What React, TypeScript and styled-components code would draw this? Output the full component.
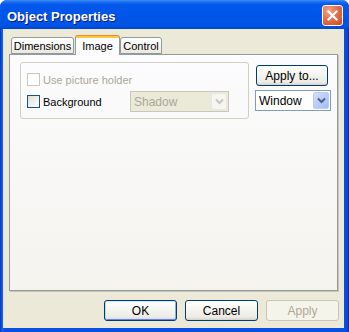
import React from 'react';
import styled, { createGlobalStyle } from 'styled-components';

const GlobalStyle = createGlobalStyle`
  html, body {
    margin: 0;
    padding: 0;
    background: #ffffff;
  }
  body {
    font-family: "Liberation Sans", Arial, sans-serif;
    font-size: 11px;
    color: #000000;
  }
`;

const Window = styled.div`
  width: 349px;
  height: 332px;
  box-sizing: border-box;
  display: flex;
  flex-direction: column;
  border-radius: 7px 7px 0 0;
  overflow: hidden;
  background: linear-gradient(to right, #0022b8 0, #0a50e0 1px, #1663ea 3px, #0a50e0 4px, #0a50e0 calc(100% - 5px), #0845d6 calc(100% - 1px), #001ea8 100%);
`;

const TitleBar = styled.div`
  height: 29px;
  flex: none;
  display: flex;
  align-items: center;
  justify-content: space-between;
  padding: 1px 6px 0 7px;
  box-sizing: border-box;
  background: linear-gradient(
    180deg,
    #3d8ff5 0%,
    #1a6cf0 7%,
    #0358ec 16%,
    #0056e8 50%,
    #0155e6 86%,
    #0047d4 100%
  );
`;

const Title = styled.span`
  font-family: "Liberation Sans", Arial, sans-serif;
  font-weight: bold;
  font-size: 13px;
  color: #ffffff;
  text-shadow: 1px 1px 0 #0a1883;
  padding-top: 2px;
`;

const CloseButton = styled.div`
  width: 21px;
  height: 21px;
  box-sizing: border-box;
  border: 1px solid #ffffff;
  border-radius: 3px;
  display: flex;
  align-items: center;
  justify-content: center;
  background: radial-gradient(circle at 30% 25%, #f0a58a 0%, #e2704c 45%, #cd4a22 100%);
`;

const Frame = styled.div`
  flex: 1;
  display: flex;
  padding: 0 5px 4px 3px;
  min-height: 0;
`;

const Body = styled.div`
  flex: 1;
  display: flex;
  flex-direction: column;
  background: #ece9d8;
  padding: 0 5px 7px 6px;
`;

const TabStrip = styled.div`
  display: flex;
  align-items: flex-end;
  height: 19px;
  margin-top: 7px;
  padding-left: 2px;
  position: relative;
  z-index: 1;
  margin-bottom: -1px;
`;

const Tab = styled.div<{ $active?: boolean; $w: number; $gap?: number }>`
  width: ${p => p.$w}px;
  margin-left: ${p => p.$gap || 0}px;
  box-sizing: border-box;
  height: ${p => (p.$active ? 20 : 17)}px;
  display: flex;
  align-items: center;
  justify-content: center;
  border: 1px solid #919b9c;
  border-bottom: ${p => (p.$active ? 'none' : '1px solid #919b9c')};
  border-top: ${p => (p.$active ? 'none' : '1px solid #919b9c')};
  border-radius: 3px 3px 0 0;
  padding-top: ${p => (p.$active ? 1 : 0)}px;
  background: ${p =>
    p.$active
      ? 'linear-gradient(#e68b2c 0, #e68b2c 1px, #ffc73c 1px, #ffc73c 3px, #ffffff 3px, #fcfcfe 100%)'
      : 'linear-gradient(#ffffff 0%, #f4f3ef 60%, #eae8de 100%)'};
  margin-bottom: ${p => (p.$active ? 0 : 1)}px;
`;

const Panel = styled.div`
  flex: 1;
  margin-right: 1px;
  border: 1px solid #919b9c;
  box-shadow: 1px 1px 0 #c8c6b8;
  background: linear-gradient(#fcfcfe, #f4f3ee);
  display: flex;
  align-items: flex-start;
  padding: 7px 0 0 10px;
`;

const GroupBox = styled.div`
  width: 229px;
  height: 57px;
  box-sizing: border-box;
  border: 1px solid #d0d0bf;
  border-radius: 3px;
  padding: 10px 6px 0 6px;
  display: flex;
  flex-direction: column;
  gap: 5px;
`;

const Row = styled.div<{ $h: number }>`
  height: ${p => p.$h}px;
  display: flex;
  align-items: center;
`;

const CheckBox = styled.div<{ $disabled?: boolean }>`
  width: 13px;
  height: 13px;
  box-sizing: border-box;
  flex: none;
  border: 1px solid ${p => (p.$disabled ? '#cac8bb' : '#1c5180')};
  background: ${p => (p.$disabled ? '#ffffff' : 'linear-gradient(135deg, #dcdcd7 0%, #f6f6f3 70%, #ffffff 100%)')};
`;

const Label = styled.span<{ $disabled?: boolean; $w?: number }>`
  margin-left: 3px;
  width: ${p => (p.$w ? `${p.$w}px` : 'auto')};
  color: ${p => (p.$disabled ? '#aca899' : '#000000')};
  white-space: nowrap;
`;

const Combo = styled.div<{ $disabled?: boolean; $w: number }>`
  width: ${p => p.$w}px;
  height: 21px;
  box-sizing: border-box;
  flex: none;
  border: 1px solid ${p => (p.$disabled ? '#c9c7ba' : '#7f9db9')};
  background: ${p => (p.$disabled ? '#ebe9d8' : '#ffffff')};
  color: ${p => (p.$disabled ? '#aca899' : '#000000')};
  display: flex;
  align-items: center;
  padding: 0 1px 0 3px;
  font-size: 12px;
`;

const ComboText = styled.span`
  flex: 1;
`;

const ComboArrow = styled.div<{ $disabled?: boolean }>`
  width: 16px;
  height: 17px;
  box-sizing: border-box;
  border-radius: 2px;
  display: flex;
  align-items: center;
  justify-content: center;
  border: 1px solid ${p => (p.$disabled ? '#e8e8df' : '#b9cdf8')};
  background: ${p =>
    p.$disabled
      ? '#f5f5f1'
      : 'linear-gradient(135deg, #d2defc 0%, #b9cdf9 50%, #a6bdf5 100%)'};
`;

const RightColumn = styled.div`
  display: flex;
  flex-direction: column;
  gap: 4px;
  margin-left: 6px;
  margin-top: 3px;
`;

const Button = styled.div<{ $w: number; $default?: boolean; $disabled?: boolean; $shift?: number }>`
  width: ${p => p.$w}px;
  height: 21px;
  margin-left: ${p => p.$shift || 0}px;
  box-sizing: border-box;
  border: 1px solid ${p => (p.$disabled ? '#c9c7ba' : '#003c74')};
  border-radius: 3px;
  display: flex;
  align-items: center;
  justify-content: center;
  font-size: 12px;
  color: ${p => (p.$disabled ? '#aca899' : '#000000')};
  background: ${p =>
    p.$disabled
      ? '#f5f4ea'
      : 'linear-gradient(#ffffff 0%, #f6f6f2 40%, #ecebe5 85%, #d6d0c5 100%)'};
  box-shadow: ${p =>
    p.$default ? 'inset 0 1px 0 #cee7ff, inset 1px 0 0 #bcd4f6, inset -1px 0 0 #89ade4, inset 0 -1px 0 #6982ee' : 'none'};
`;

const ButtonRow = styled.div`
  display: flex;
  justify-content: flex-end;
  gap: 8px;
  margin-top: 9px;
`;

const Chevron: React.FC<{ color: string }> = ({ color }) => (
  <svg width="9" height="7" viewBox="0 0 9 7">
    <path d="M1 1.5 L4.5 5 L8 1.5" fill="none" stroke={color} strokeWidth="2" />
  </svg>
);

export default function App() {
  return (
    <>
      <GlobalStyle />
      <Window>
        <TitleBar>
          <Title>Object Properties</Title>
          <CloseButton>
            <svg width="13" height="13" viewBox="0 0 13 13">
              <path d="M2.5 2.5 L10.5 10.5 M10.5 2.5 L2.5 10.5" stroke="#ffffff" strokeWidth="2.2" strokeLinecap="square" />
            </svg>
          </CloseButton>
        </TitleBar>
        <Frame>
          <Body>
            <TabStrip>
              <Tab $w={63}>Dimensions</Tab>
              <Tab $w={45} $gap={1} $active>Image</Tab>
              <Tab $w={42}>Control</Tab>
            </TabStrip>
            <Panel>
              <GroupBox>
                <Row $h={13}>
                  <CheckBox $disabled />
                  <Label $disabled>Use picture holder</Label>
                </Row>
                <Row $h={21}>
                  <CheckBox />
                  <Label $w={87}>Background</Label>
                  <Combo $disabled $w={99}>
                    <ComboText>Shadow</ComboText>
                    <ComboArrow $disabled>
                      <Chevron color="#c9c7ba" />
                    </ComboArrow>
                  </Combo>
                </Row>
              </GroupBox>
              <RightColumn>
                <Button $w={72} $shift={1}>Apply to...</Button>
                <Combo $w={76}>
                  <ComboText>Window</ComboText>
                  <ComboArrow>
                    <Chevron color="#4d6185" />
                  </ComboArrow>
                </Combo>
              </RightColumn>
            </Panel>
            <ButtonRow>
              <Button $w={73} $default>OK</Button>
              <Button $w={73}>Cancel</Button>
              <Button $w={73} $disabled>Apply</Button>
            </ButtonRow>
          </Body>
        </Frame>
      </Window>
    </>
  );
}
